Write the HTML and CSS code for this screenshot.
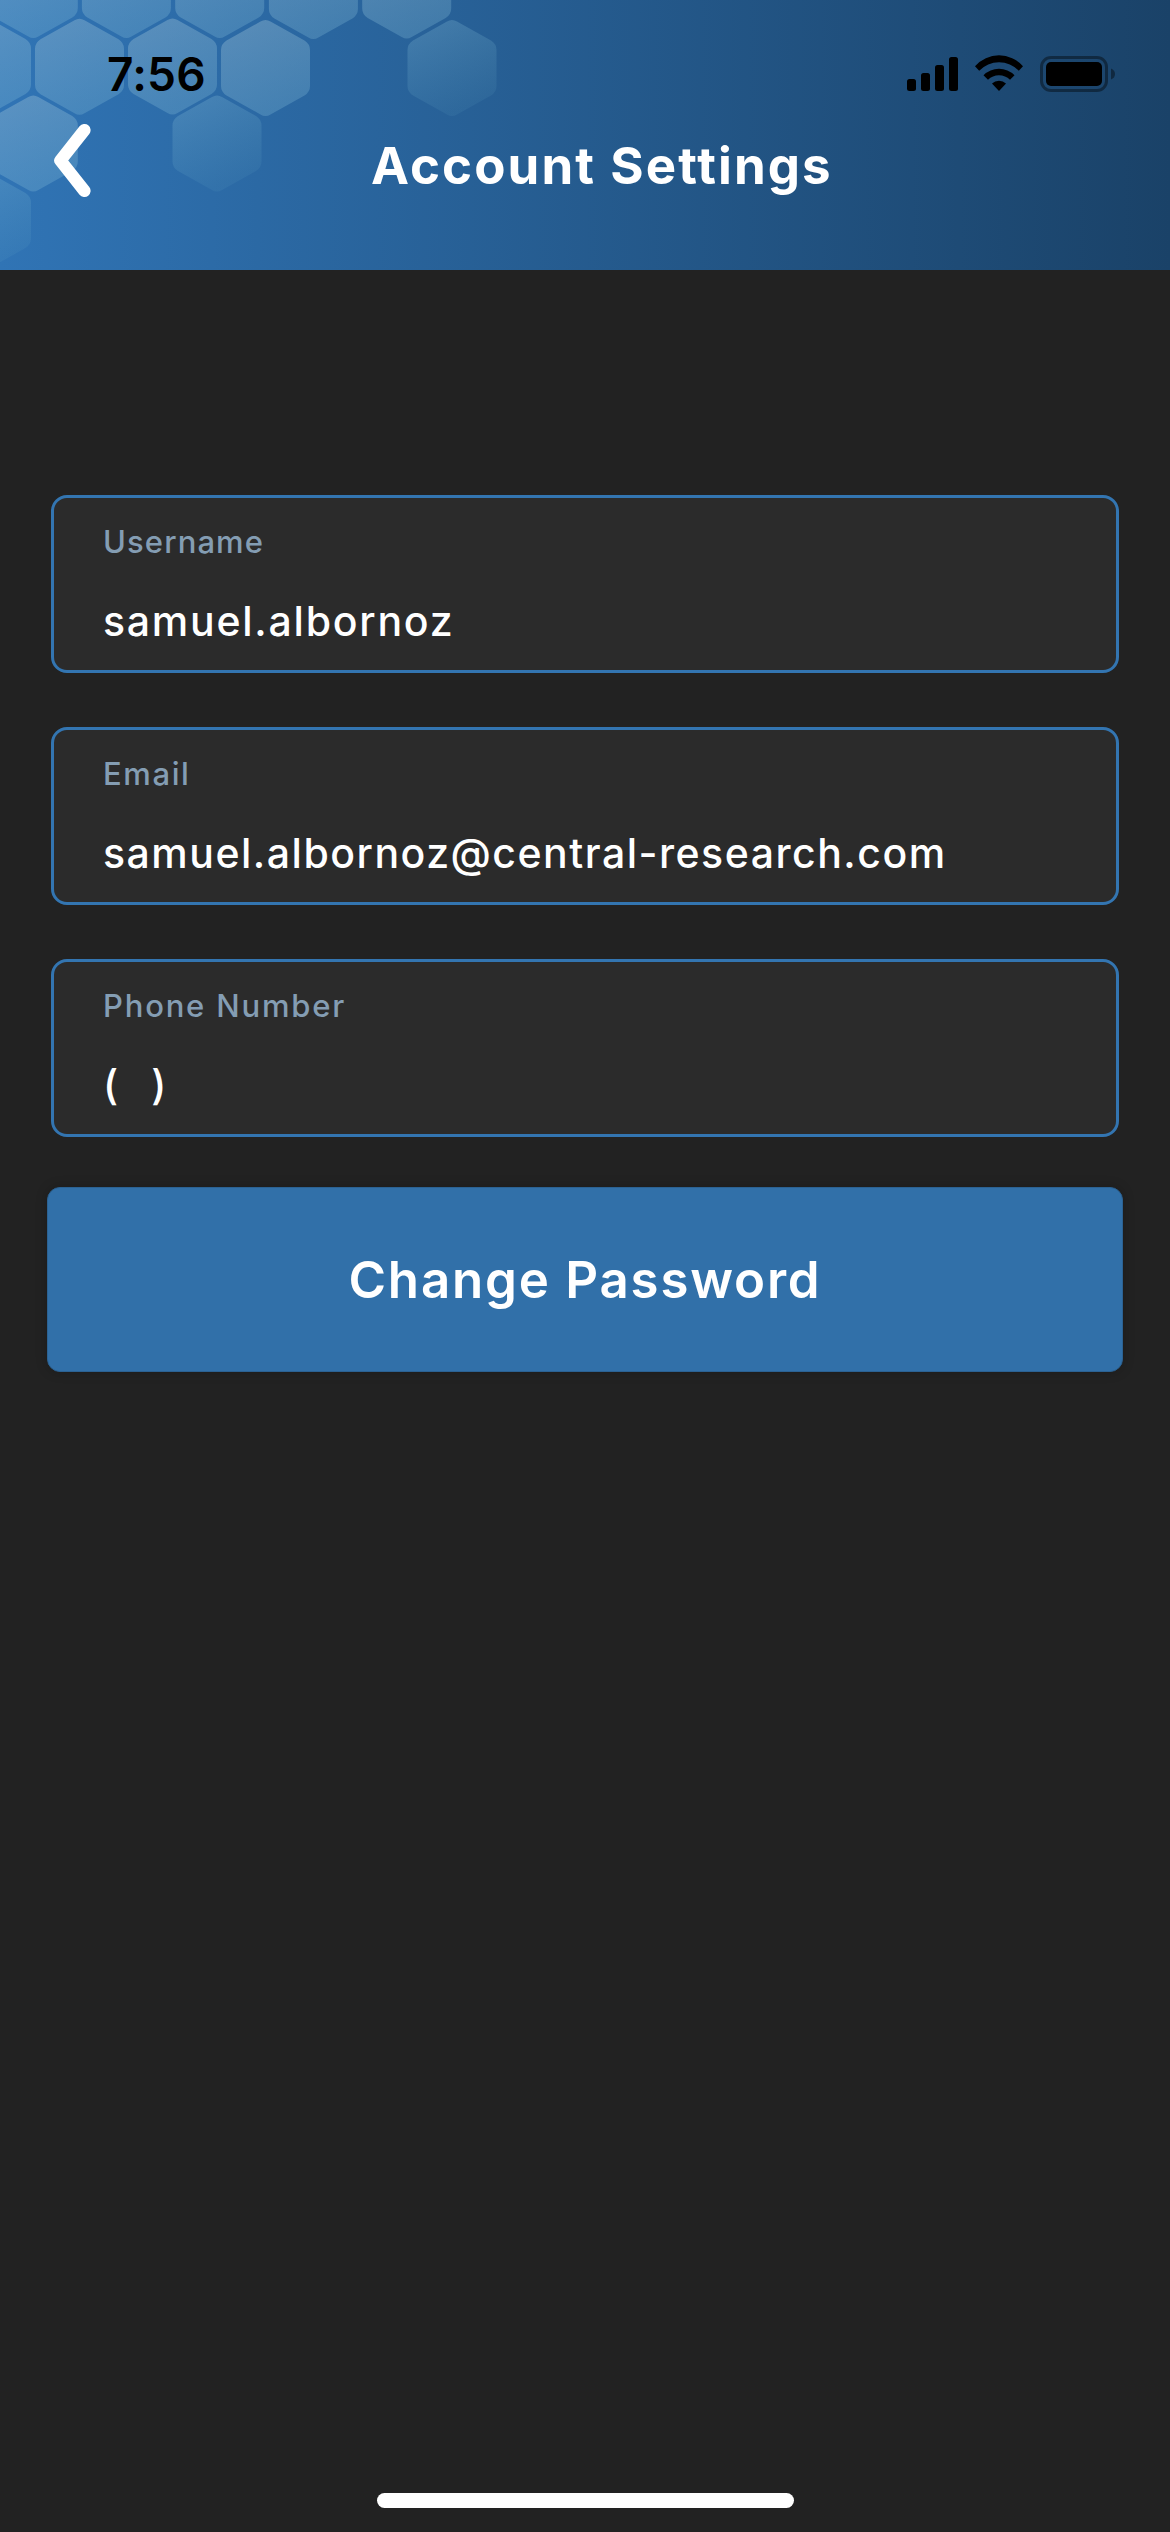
FILE: index.html
```html
<!DOCTYPE html>
<html lang="en">
<head>
<meta charset="utf-8">
<title>Account Settings</title>
<link rel="stylesheet" href="styles.css">
</head>
<body>
<div class="screen">
  <header class="header">
    <svg class="pattern" width="540" height="270" viewBox="0 0 540 270" aria-hidden="true">
      <defs>
        <linearGradient id="fade" x1="0" y1="0" x2="0.35" y2="1">
          <stop offset="0" stop-color="#a6c6d8" stop-opacity=".38"/>
          <stop offset="1" stop-color="#8cc4dc" stop-opacity=".27"/>
        </linearGradient>
        <linearGradient id="faint" x1="0" y1="0" x2="0.35" y2="1">
          <stop offset="0" stop-color="#90c4dc" stop-opacity=".29"/>
          <stop offset="1" stop-color="#70b4cc" stop-opacity=".1"/>
        </linearGradient>
        <path id="hex" d="M-5-46.5Q0-49.5 5-46.5L39-27.5Q44.500-24 44.500-18V18Q44.500 24 39 27.500L5 46.500Q0 49.500-5 46.500L-39 27.500Q-44.500 24-44.500 18V-18Q-44.500-24-39-27.500Z"/>
      </defs>
      <g fill="url(#fade)">
        <use href="#hex" x="33.300" y="-10"/>
        <use href="#hex" x="126.400" y="-10"/>
        <use href="#hex" x="219.700" y="-10"/>
        <use href="#hex" x="313.400" y="-9"/>
        <use href="#hex" x="406.700" y="-9.500"/>
        <use href="#hex" x="-13.500" y="66.500"/>
        <use href="#hex" x="79.500" y="66.700"/>
        <use href="#hex" x="172.500" y="66.500"/>
        <use href="#hex" x="265.500" y="68"/>
        <use href="#hex" x="33.300" y="143.500"/>
      </g>
      <g fill="url(#faint)">
        <use href="#hex" x="452" y="68"/>
        <use href="#hex" x="217" y="143.500"/>
        <use href="#hex" x="-13.500" y="220.500"/>
      </g>
    </svg>
    <div class="status">
      <span class="time">7:56</span>
      <svg class="indicators" width="208" height="38" viewBox="907 55 208 38" aria-hidden="true">
        <rect x="907" y="79" width="9" height="12" rx="2.500"/>
        <rect x="921" y="73" width="9" height="18" rx="2.500"/>
        <rect x="935" y="65" width="9" height="26" rx="2.500"/>
        <rect x="949" y="57" width="9" height="34" rx="2.500"/>
        <path d="M975 66.200A32 32 0 0 1 1023 66.200L1018.800 70.800A27 27 0 0 0 979.200 70.800Z"/>
        <path d="M983.500 75.200A22 22 0 0 1 1014.500 75.200L1010 79.800A15.500 15.500 0 0 0 988 79.800Z"/>
        <path d="M992 83.600A10 10 0 0 1 1006 83.600L999 91Z"/>
        <rect class="shell" x="1041.500" y="57.500" width="65" height="33" rx="9.500"/>
        <rect x="1046" y="62" width="56" height="24" rx="5"/>
        <path class="nub" d="M1111 68.500Q1115 70 1115 74T1111 79.500Z"/>
      </svg>
    </div>
    <nav class="bar">
      <svg class="back" width="37" height="73" viewBox="54.400 124 37 73" role="img" aria-label="Back">
        <path d="M84.800 130.200L60.800 160.500L84.800 190.800"/>
      </svg>
      <h1 class="title">Account Settings</h1>
    </nav>
  </header>
  <main class="content">
    <section class="field">
      <span class="label label-user">Username</span>
      <span class="value">samuel.albornoz</span>
    </section>
    <section class="field">
      <span class="label label-email">Email</span>
      <span class="value value-email">samuel.albornoz@central-research.com</span>
    </section>
    <section class="field">
      <span class="label label-phone">Phone Number</span>
      <span class="value value-phone">(&nbsp; )</span>
    </section>
    <button class="action" type="button">Change Password</button>
  </main>
  <div class="home-bar"></div>
</div>
</body>
</html>
```
FILE: styles.css
```css
* { box-sizing: border-box; }

body {
  margin: 0;
  background: #222;
  font-family: Inter, "Liberation Sans", sans-serif;
  color: #fff;
}

.screen {
  display: flex;
  flex-direction: column;
  width: 1170px;
  height: 2532px;
  background: #222;
}

.header {
  position: relative;
  height: 270px;
  background: linear-gradient(90deg, #3074b5 0%, #1a4268 100%);
}

.pattern {
  position: absolute;
  top: 0;
  left: 0;
}

.status {
  position: relative;
  display: flex;
  justify-content: space-between;
  align-items: flex-start;
  height: 124px;
  padding: 55px 55px 0 107px;
  color: #000;
}

.time {
  font-size: 46px;
  line-height: 38px;
  font-weight: 600;
  letter-spacing: .2px;
}

.shell {
  fill: none;
  stroke: #000;
  stroke-width: 3;
  opacity: .4;
}

.nub { opacity: .4; }

.bar {
  position: relative;
  display: flex;
  align-items: flex-start;
  padding-left: 54px;
}

.back path {
  fill: none;
  stroke: #fff;
  stroke-width: 12.4;
  stroke-linecap: round;
  stroke-linejoin: round;
}

.title {
  margin: 12px 0 0 280px;
  font-size: 51px;
  line-height: 60px;
  font-weight: 700;
  letter-spacing: 2.1px;
  white-space: nowrap;
}

.content {
  display: flex;
  flex-direction: column;
  gap: 54px;
  padding: 225px 51px 0;
}

.field {
  display: flex;
  flex-direction: column;
  height: 178px;
  padding: 26px 49px 0;
  border: 3px solid #3375b1;
  border-radius: 16px;
  background: #2b2b2b;
  white-space: nowrap;
}

.label {
  font-size: 31px;
  line-height: 36px;
  letter-spacing: 1.1px;
  font-weight: 500;
  color: #849db3;
}

.label-email { letter-spacing: 1.6px; }

.label-phone { letter-spacing: 1.8px; }

.value {
  margin-top: 36px;
  font-size: 41px;
  line-height: 50px;
  font-weight: 500;
  letter-spacing: 1.75px;
}

.value-email { letter-spacing: 1.5px; }

.value-phone { word-spacing: 3px; }

.action {
  height: 185px;
  margin: -4px -4px 0;
  padding: 0;
  border: 1px solid #2b6293;
  border-radius: 13px;
  background: #3170a9;
  box-shadow: 0 0 12px rgba(0, 0, 0, .22);
  font: 600 51px/60px Inter, "Liberation Sans", sans-serif;
  letter-spacing: 1.8px;
  color: #fff;
}

.home-bar {
  width: 417px;
  height: 15px;
  margin: auto auto 24px;
  border-radius: 8px;
  background: #fff;
}
```
